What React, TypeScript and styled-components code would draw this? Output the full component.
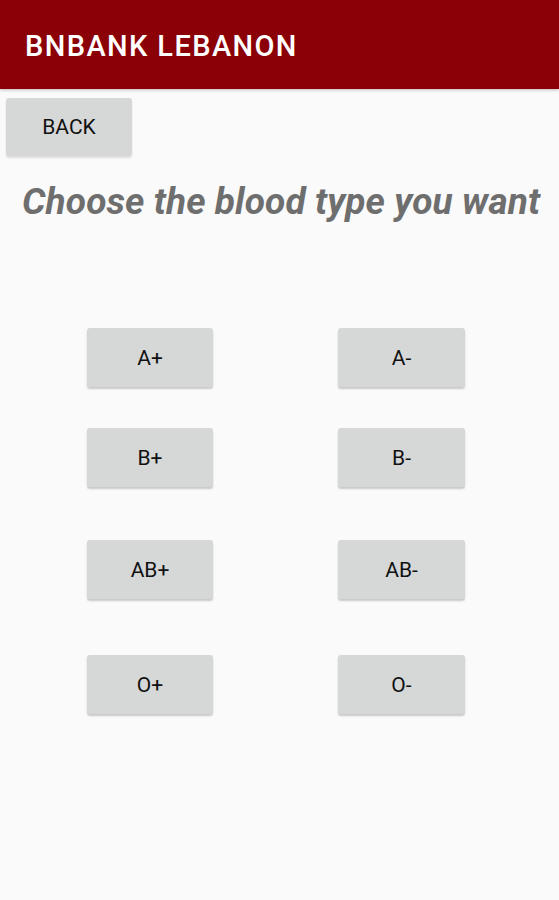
import styled, { createGlobalStyle } from "styled-components";

const GlobalStyle = createGlobalStyle`
  html, body {
    margin: 0;
    padding: 0;
    background: #fafafa;
    font-family: Roboto, "Liberation Sans", sans-serif;
  }
`;

const Page = styled.div`
  display: flex;
  flex-direction: column;
  min-height: 900px;
  background: #fafafa;
`;

const AppBar = styled.header`
  height: 89px;
  background: #8b0006;
  display: flex;
  align-items: center;
  padding: 3px 0 0 25px;
  box-sizing: border-box;
  box-shadow: 0 1px 3px rgba(0, 0, 0, 0.25);
`;

const AppTitle = styled.h1`
  margin: 0;
  color: #ffffff;
  font-size: 29px;
  font-weight: 500;
  letter-spacing: 1.4px;
`;

const BackButton = styled.button`
  align-self: flex-start;
  margin: 9px 0 0 6px;
  width: 126px;
  height: 58px;
  border: none;
  border-radius: 3px;
  background: #d6d7d7;
  color: #111;
  font-family: Roboto, "Liberation Sans", sans-serif;
  font-size: 21px;
  font-weight: 400;
  box-shadow: 0 2px 2px rgba(0, 0, 0, 0.12);
`;

const Heading = styled.h2`
  margin: 24px 0 0 22px;
  color: #6e6e6e;
  font-size: 37px;
  font-weight: 700;
  font-style: italic;
  line-height: 44px;
  letter-spacing: 0.1px;
  white-space: nowrap;
`;

const Grid = styled.div`
  display: flex;
  flex-direction: column;
  padding-left: 87px;
`;

const Row = styled.div<{ $top: number }>`
  display: grid;
  grid-template-columns: 126px 127px;
  column-gap: 125px;
  margin-top: ${(p) => p.$top}px;
`;

const TypeButton = styled.button`
  height: 59px;
  border: none;
  border-radius: 3px;
  background: #d6d7d7;
  color: #111;
  font-family: Roboto, "Liberation Sans", sans-serif;
  font-size: 21px;
  font-weight: 400;
  box-shadow: 0 2px 2px rgba(0, 0, 0, 0.2);
`;

const rows: { top: number; types: [string, string] }[] = [
  { top: 104, types: ["A+", "A-"] },
  { top: 41, types: ["B+", "B-"] },
  { top: 53, types: ["AB+", "AB-"] },
  { top: 56, types: ["O+", "O-"] },
];

export default function App() {
  return (
    <>
      <GlobalStyle />
      <Page>
        <AppBar>
          <AppTitle>BNBANK LEBANON</AppTitle>
        </AppBar>
        <BackButton>BACK</BackButton>
        <Heading>Choose the blood type you want</Heading>
        <Grid>
          {rows.map((row) => (
            <Row key={row.types[0]} $top={row.top}>
              {row.types.map((t) => (
                <TypeButton key={t}>{t}</TypeButton>
              ))}
            </Row>
          ))}
        </Grid>
      </Page>
    </>
  );
}
